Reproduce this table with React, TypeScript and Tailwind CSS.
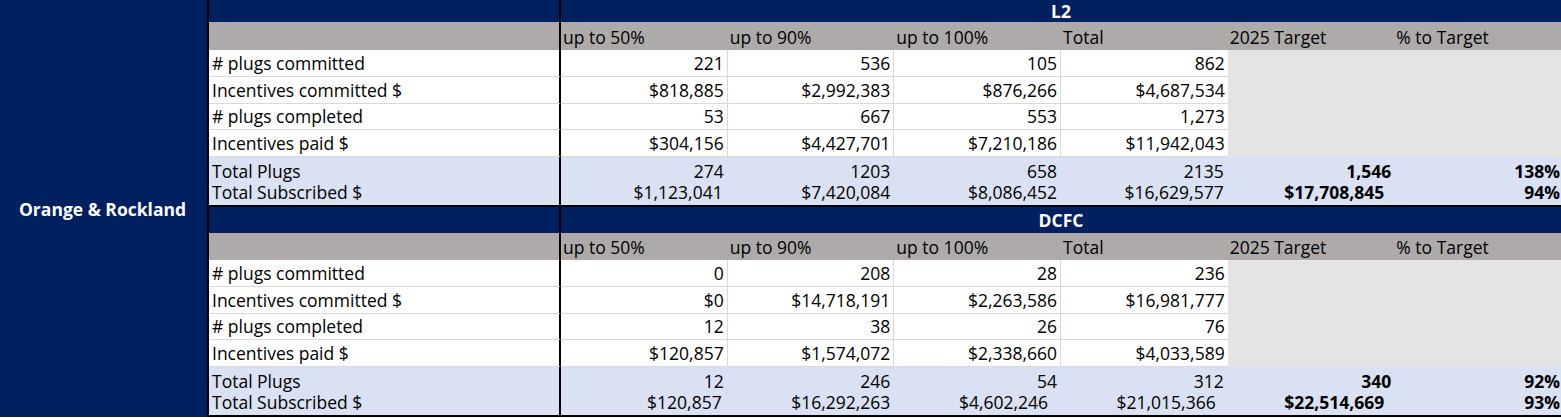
import type { FC } from "react";

type Cell = { v: string; pr?: string };

type Block = {
  title: string;
  titleH: string;
  headH: string;
  rows: { label: string; values: string[] }[];
  plugs: Cell[];
  subscribed: Cell[];
};

const columns = ["up to 50%", "up to 90%", "up to 100%", "Total", "2025 Target", "% to Target"];

const blocks: Block[] = [
  {
    title: "L2",
    titleH: "h-[22px]",
    headH: "h-[28px]",
    rows: [
      { label: "# plugs committed", values: ["221", "536", "105", "862"] },
      { label: "Incentives committed $", values: ["$818,885", "$2,992,383", "$876,266", "$4,687,534"] },
      { label: "# plugs completed", values: ["53", "667", "553", "1,273"] },
      { label: "Incentives paid $", values: ["$304,156", "$4,427,701", "$7,210,186", "$11,942,043"] },
    ],
    plugs: [{ v: "274" }, { v: "1203" }, { v: "658" }, { v: "2135" }, { v: "1,546" }, { v: "138%" }],
    subscribed: [
      { v: "$1,123,041", pr: "pr-[5px]" },
      { v: "$7,420,084" },
      { v: "$8,086,452" },
      { v: "$16,629,577" },
      { v: "$17,708,845", pr: "pr-[10px]" },
      { v: "94%" },
    ],
  },
  {
    title: "DCFC",
    titleH: "h-[26px]",
    headH: "h-[27px]",
    rows: [
      { label: "# plugs committed", values: ["0", "208", "28", "236"] },
      { label: "Incentives committed $", values: ["$0", "$14,718,191", "$2,263,586", "$16,981,777"] },
      { label: "# plugs completed", values: ["12", "38", "26", "76"] },
      { label: "Incentives paid $", values: ["$120,857", "$1,574,072", "$2,338,660", "$4,033,589"] },
    ],
    plugs: [{ v: "12" }, { v: "246" }, { v: "54" }, { v: "312" }, { v: "340" }, { v: "92%" }],
    subscribed: [
      { v: "$120,857", pr: "pr-[6px]" },
      { v: "$16,292,263" },
      { v: "$4,602,246", pr: "pr-[13px]" },
      { v: "$21,015,366", pr: "pr-[12px]" },
      { v: "$22,514,669", pr: "pr-[10px]" },
      { v: "93%" },
    ],
  },
];

const TotalCell: FC<{ cell: Cell; bold: boolean; last: boolean }> = ({ cell, bold, last }) => (
  <div
    className={`h-[21px] leading-[21px] text-right whitespace-nowrap ${
      cell.pr ?? (last ? "pr-[1px]" : bold ? "pr-[3px]" : "pr-[4px]")
    } ${bold ? "font-bold" : ""}`}>
    {cell.v}
  </div>
);

const Section: FC<{ block: Block }> = ({ block }) => (
  <div className="grid grid-cols-[352px_repeat(6,minmax(0,1fr))] border-b-2 border-black">
    {/* navy title row */}
    <div className={`${block.titleH} bg-[#002060] border-r-2 border-black`} />
    <div
      className={`${block.titleH} col-span-6 bg-[#002060] text-white font-bold flex items-center justify-center`}>
      {block.title}
    </div>

    {/* gray column header */}
    <div className={`${block.headH} bg-[#aeaaaa] border-r-2 border-black`} />
    {columns.map((c) => (
      <div key={c} className={`${block.headH} bg-[#aeaaaa] flex items-end pb-[1px] pl-[2px] whitespace-nowrap`}>
        {c}
      </div>
    ))}

    {/* data rows */}
    {block.rows.map((row, i) => (
      <div key={row.label} className="contents">
        <div className="h-[26.75px] bg-white border-r-2 border-black border-b border-b-[#d9d9d9] flex items-end pb-[1px] pl-[3px] whitespace-nowrap">
          {row.label}
        </div>
        {row.values.map((v, j) => (
          <div
            key={j}
            className={`h-[26.75px] bg-white border-b border-b-[#d9d9d9] ${
              j < 3 ? "border-r border-r-[#d9d9d9]" : ""
            } flex items-end justify-end pb-[1px] pr-[3px] whitespace-nowrap`}>
            {v}
          </div>
        ))}
        {i === 0 && <div className="col-span-2 row-span-4 bg-[#e4e4e4]" />}
      </div>
    ))}

    {/* totals */}
    <div className="h-[48px] bg-[#d9e1f2] border-r-2 border-black flex flex-col justify-end pb-[2px] pl-[3px]">
      <div className="h-[21px] leading-[21px]">Total Plugs</div>
      <div className="h-[21px] leading-[21px]">Total Subscribed $</div>
    </div>
    {block.plugs.map((p, j) => (
      <div key={j} className="h-[48px] bg-[#d9e1f2] flex flex-col justify-end pb-[2px]">
        <TotalCell cell={p} bold={j >= 4} last={j === 5} />
        <TotalCell cell={block.subscribed[j]} bold={j >= 4} last={j === 5} />
      </div>
    ))}
  </div>
);

export default function App() {
  return (
    <div
      className="w-[1561px] h-[418px] bg-white flex text-[17.5px] leading-[24px] text-black"
      style={{ fontFamily: "'Open Sans', 'Noto Sans', sans-serif" }}>
      <div className="w-[209px] h-[417px] bg-[#002060] border-r-2 border-black flex items-center justify-center pr-[2px] text-white font-bold">
        Orange &amp; Rockland
      </div>
      <div className="flex-1 flex flex-col">
        {blocks.map((b) => (
          <Section key={b.title} block={b} />
        ))}
      </div>
    </div>
  );
}
